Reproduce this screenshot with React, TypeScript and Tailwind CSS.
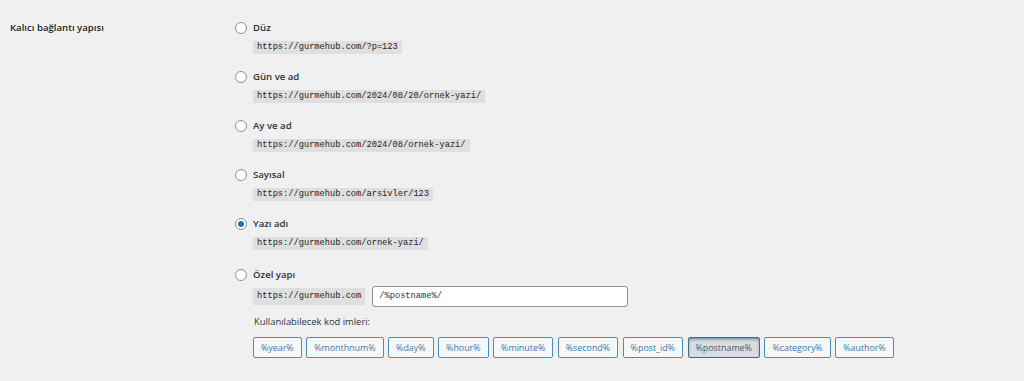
import React from "react";

const font = { fontFamily: '"Open Sans", "Noto Sans", sans-serif' };

function Radio({ checked }: { checked?: boolean }) {
  return (
    <span className="w-[12px] h-[12px] rounded-full border border-[#8c8f94] bg-white flex items-center justify-center shrink-0">
      {checked && <span className="w-[6px] h-[6px] rounded-full bg-[#2271b1]" />}
    </span>
  );
}

function Code({ children }: { children: React.ReactNode }) {
  return (
    <span className="inline-block bg-[#dfdfe0] text-[#1d2327] px-[4px] h-[13px] leading-[13px] text-[8.7px] [font-family:'Liberation_Mono',monospace] whitespace-nowrap">
      {children}
    </span>
  );
}

const options = [
  { label: "Düz", code: "https://gurmehub.com/?p=123" },
  { label: "Gün ve ad", code: "https://gurmehub.com/2024/08/20/ornek-yazi/" },
  { label: "Ay ve ad", code: "https://gurmehub.com/2024/08/ornek-yazi/" },
  { label: "Sayısal", code: "https://gurmehub.com/arsivler/123" },
  { label: "Yazı adı", code: "https://gurmehub.com/ornek-yazi/", checked: true },
];

const tags = [
  "%year%",
  "%monthnum%",
  "%day%",
  "%hour%",
  "%minute%",
  "%second%",
  "%post_id%",
  "%postname%",
  "%category%",
  "%author%",
];

export default function App() {
  return (
    <div className="w-[1024px] h-[381px] bg-[#f0f0f1] text-[#1d2327] overflow-hidden" style={font}>
      <div className="flex pt-[21px]">
        <div className="w-[235px] pl-[10px] h-[14px] flex items-center text-[9.6px] font-semibold">
          Kalıcı bağlantı yapısı
        </div>
        <div className="flex flex-col">
          {options.map((o) => (
            <div key={o.label} className="flex flex-col mb-[16px]">
              <div className="flex items-center gap-[6px] h-[14px]">
                <Radio checked={o.checked} />
                <span className="text-[9.6px] font-semibold text-[#2c3338]">{o.label}</span>
              </div>
              <div className="pl-[18px] mt-[6px] flex">
                <Code>{o.code}</Code>
              </div>
            </div>
          ))}
          <div className="flex flex-col mt-[2px]">
            <div className="flex items-center gap-[6px] h-[14px]">
              <Radio />
              <span className="text-[9.6px] font-semibold text-[#2c3338]">Özel yapı</span>
            </div>
            <div className="pl-[18px] mt-[4px] flex items-center gap-[7px]">
              <span className="inline-block bg-[#dfdfe0] text-[#1d2327] px-[4px] h-[17px] leading-[17px] text-[8.7px] [font-family:'Liberation_Mono',monospace] whitespace-nowrap">
                https://gurmehub.com
              </span>
              <div className="w-[256px] h-[21px] bg-white border border-[#8c8f94] rounded-[3px] flex items-center pl-[6px] text-[8.7px] [font-family:'Liberation_Mono',monospace] text-[#2c3338]">
                /%postname%/
              </div>
            </div>
            <div className="pl-[19px] mt-[8px] h-[14px] flex items-center text-[9.4px] text-[#2c3338]">
              Kullanılabilecek kod imleri:
            </div>
            <div className="pl-[18px] mt-[8px] flex gap-[4.5px]">
              {tags.map((t) => {
                const active = t === "%postname%";
                return (
                  <span
                    key={t}
                    className={
                      active
                        ? "h-[21px] px-[7px] flex items-center rounded-[2px] border border-[#4a6a85] bg-[#dcdcde] text-[#3d5c78] text-[8.9px] shadow-[inset_0_2px_4px_-2px_#0a4b78]"
                        : "h-[21px] px-[7px] flex items-center rounded-[2px] border border-[#4b8bc0] bg-[#f6f7f7] text-[#3a7bb2] text-[8.9px]"
                    }
                  >
                    {t}
                  </span>
                );
              })}
            </div>
          </div>
        </div>
      </div>
    </div>
  );
}
